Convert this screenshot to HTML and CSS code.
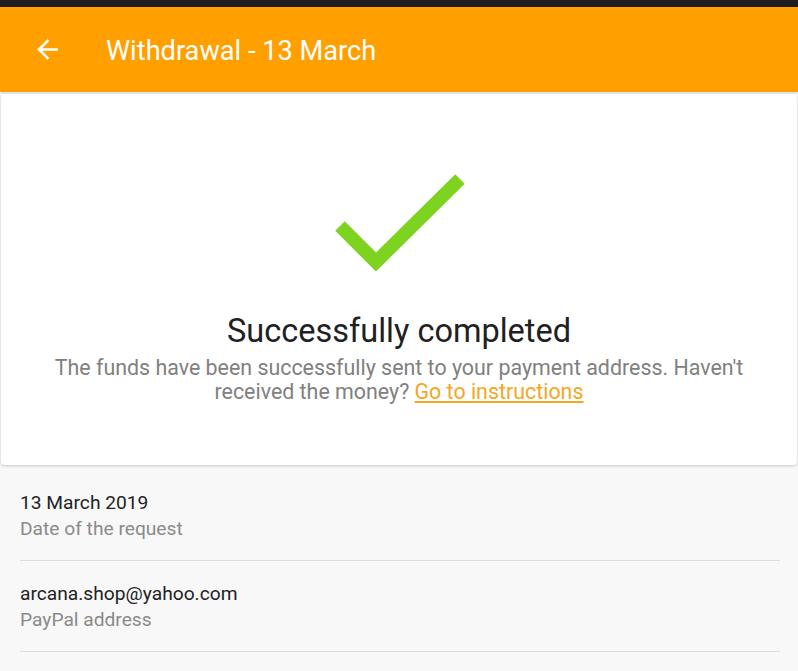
FILE: index.html
```html
<!doctype html>
<html lang="en">
<head>
    <meta charset="UTF-8">
    <title>Withdrawal - 13 March</title>
<link rel="stylesheet" href="styles.css">
</head>
<body>
<div class="status-bar"></div>
<header class="app-bar">
<a class="back" href="#" aria-label="Back">
<svg viewBox="0 0 24 24" width="31" height="31"><path d="M20 11H7.83l5.59-5.59L12 4l-8 8 8 8 1.41-1.41L7.83 13H20v-2z" fill="#fff"/></svg>
</a>
<h1>Withdrawal - 13 March</h1>
</header>

<section class="card">
<svg class="check" viewBox="0 0 140 110" width="140" height="110">
<polyline points="16,62 52,98 136,15" fill="none" stroke="#7ed321" stroke-width="13.5"/>
</svg>
<h2>Successfully completed</h2>
<p class="note">The funds have been successfully sent to your payment address. Haven't received the money? <a href="#">Go to instructions</a></p>
</section>

<ul class="details">
<li>
<div class="value">13 March 2019</div>
<div class="label">Date of the request</div>
</li>
<li>
<div class="value">arcana.shop@yahoo.com</div>
<div class="label">PayPal address</div>
</li>
</ul>
</body>
</html>
```

FILE: styles.css
```css
body {
    margin: 0;
    background-color: #f8f8f8;
    font-family: Roboto, "Noto Sans", sans-serif;
}
.status-bar {
    height: 7px;
    background-color: #1e1e1e;
}
.app-bar {
    height: 85px;
    background-color: #ffa000;
    display: flex;
    align-items: center;
    box-shadow: 0 1px 3px rgba(0, 0, 0, 0.15);
}
.back {
    display: flex;
    margin-left: 32px;
    margin-right: 43px;
}
.app-bar h1 {
    margin: 2px 0 0;
    color: #fff;
    font-size: 27.2px;
    font-weight: 400;
}
.card {
    margin: 2px 1px 0 1px;
    background-color: #fff;
    border-radius: 0 0 4px 4px;
    box-shadow: 0 1px 3px rgba(0, 0, 0, 0.2);
    text-align: center;
    padding: 70px 48px 61px;
}
.check {
    display: block;
    margin: 0 0 0 275px;
}
.card h2 {
    margin: 38px 0 0;
    font-size: 32.5px;
    line-height: 38px;
    font-weight: 400;
    color: #212121;
}
.note {
    margin: 6px 0 0;
    font-size: 21.4px;
    line-height: 24px;
    color: #808080;
}
.note a {
    color: #f5a623;
}
.details {
    list-style: none;
    margin: 0;
    padding: 5px 18px 0 20px;
}
.details li {
    border-bottom: 1px solid #dcdcdc;
    padding: 20px 0 18px;
}
.value {
    font-size: 19.2px;
    color: #222;
    line-height: 26px;
}
.label {
    font-size: 19.2px;
    color: #8a8a8a;
    line-height: 26px;
}
```
